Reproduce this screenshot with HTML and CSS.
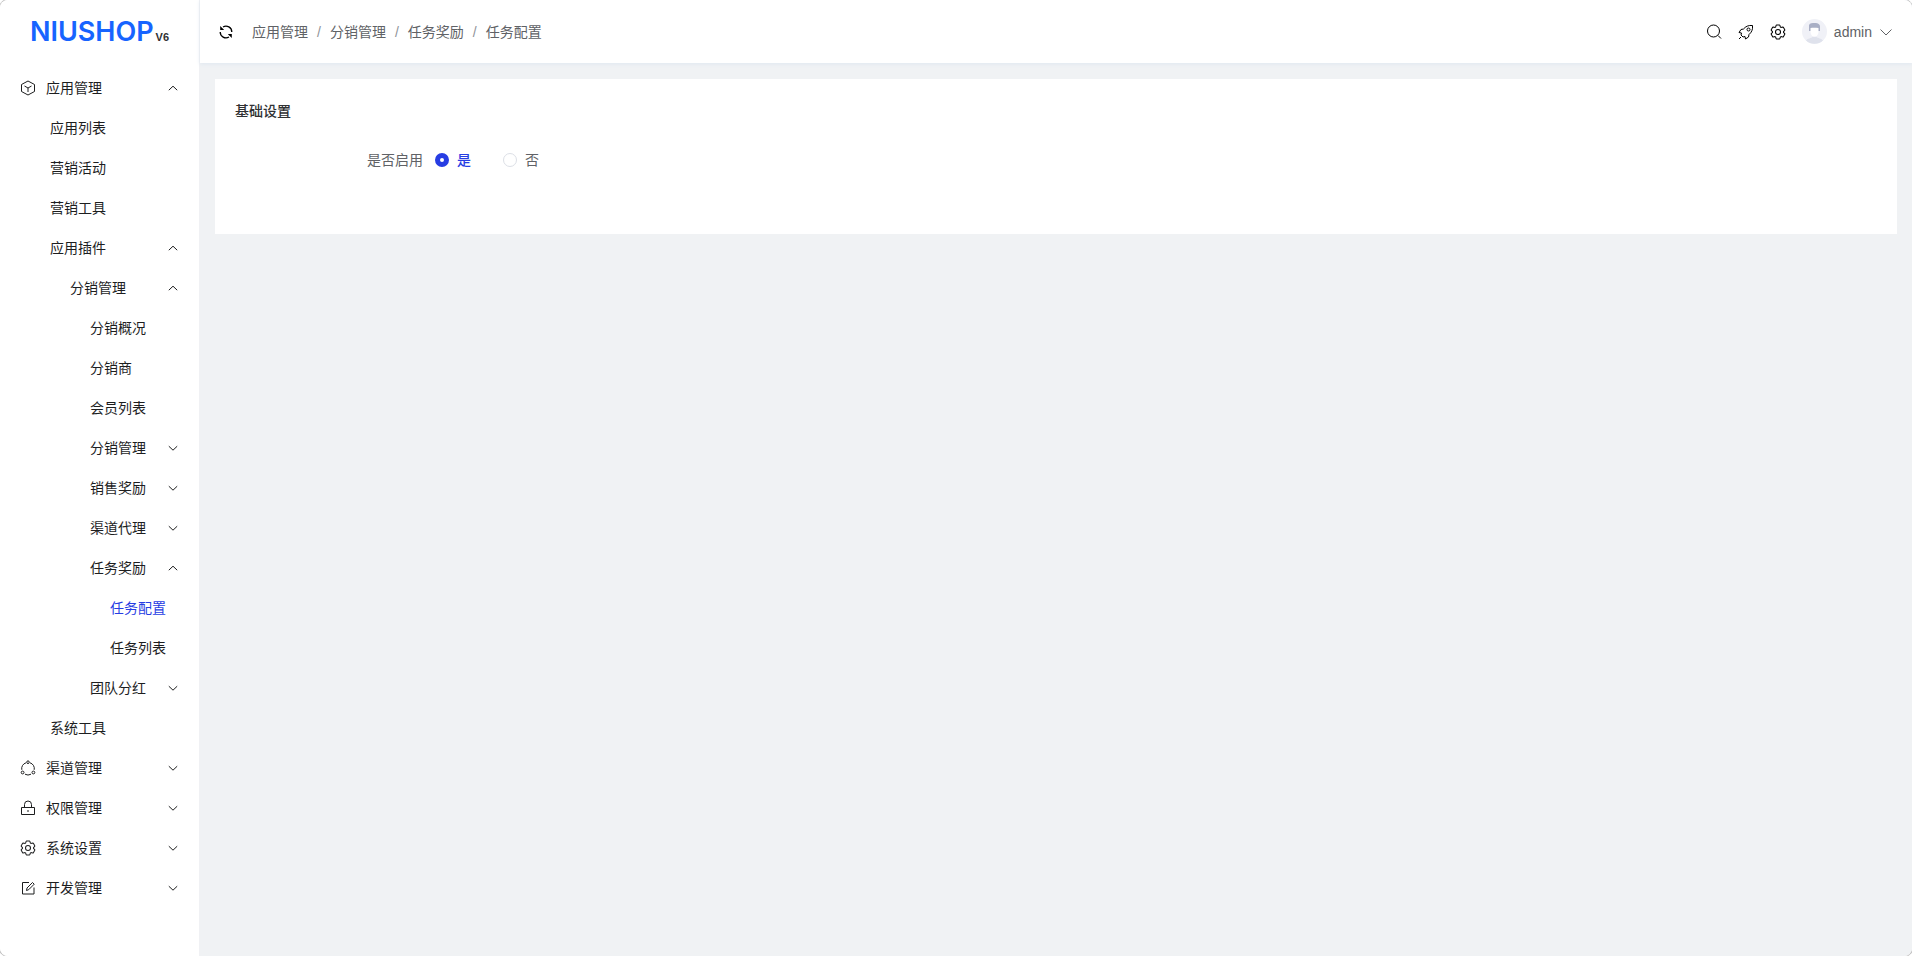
FILE: index.html
```
<!DOCTYPE html>
<html lang="zh-CN">
<head>
    <meta charset="UTF-8">
    <meta name="viewport" content="width=device-width, initial-scale=1.0">
    <title>任务配置</title>
    <link rel="stylesheet" href="styles.css">
</head>
<body>
    <!-- Shared icons -->
    <svg class="sprite" aria-hidden="true">
        <symbol id="up" viewBox="0 0 12 12"><path d="M1.8 8.2L6 4.200l4.200 4"/></symbol>
        <symbol id="down" viewBox="0 0 12 12"><path d="M1.8 4.200L6 8.200l4.200-4"/></symbol>
        <symbol id="gear" viewBox="0 0 1024 1024">
            <path stroke-width="66" d="M600.704 64a32 32 0 0 1 30.464 22.208l35.2 109.376c14.784 7.232 28.928 15.36 42.432 24.512l112.384-24.192a32 32 0 0 1 34.432 15.36L944.32 364.8a32 32 0 0 1-4.032 37.504l-77.12 85.12a357.12 357.12 0 0 1 0 49.024l77.12 85.248a32 32 0 0 1 4.032 37.504l-88.704 153.6a32 32 0 0 1-34.432 15.296L708.8 803.904c-13.44 9.088-27.648 17.28-42.368 24.512l-35.264 109.376A32 32 0 0 1 600.704 960H423.296a32 32 0 0 1-30.464-22.208L357.696 828.48a351.616 351.616 0 0 1-42.56-24.64l-112.32 24.256a32 32 0 0 1-34.432-15.36L79.68 659.2a32 32 0 0 1 4.032-37.504l77.12-85.248a357.12 357.12 0 0 1 0-48.896l-77.12-85.248A32 32 0 0 1 79.68 364.8l88.704-153.6a32 32 0 0 1 34.432-15.296l112.32 24.256c13.568-9.152 27.776-17.408 42.56-24.64l35.2-109.312A32 32 0 0 1 423.232 64z"/>
            <circle stroke-width="66" cx="512" cy="512" r="160"/>
        </symbol>
    </svg>
    <div class="app">
        <aside class="sidebar">
            <a class="logo" href="#"><span class="logo-name">NIUSHOP</span><span class="logo-version">V6</span></a>
            <nav class="menu">
                <button class="menu-item top">
                    <svg class="icon" viewBox="0 0 16 16"><path d="M8 1l6.500 3.500v7L8 15l-6.500-3.500v-7zM4.500 6L8 8l3.500-2M8 8v4"/></svg>
                    <span>应用管理</span><svg class="arrow"><use href="#up"/></svg>
                </button>
                <a class="menu-item level-1" href="#">应用列表</a>
                <a class="menu-item level-1" href="#">营销活动</a>
                <a class="menu-item level-1" href="#">营销工具</a>
                <button class="menu-item level-1"><span>应用插件</span><svg class="arrow"><use href="#up"/></svg></button>
                <button class="menu-item level-2"><span>分销管理</span><svg class="arrow"><use href="#up"/></svg></button>
                <a class="menu-item level-3" href="#">分销概况</a>
                <a class="menu-item level-3" href="#">分销商</a>
                <a class="menu-item level-3" href="#">会员列表</a>
                <button class="menu-item level-3"><span>分销管理</span><svg class="arrow"><use href="#down"/></svg></button>
                <button class="menu-item level-3"><span>销售奖励</span><svg class="arrow"><use href="#down"/></svg></button>
                <button class="menu-item level-3"><span>渠道代理</span><svg class="arrow"><use href="#down"/></svg></button>
                <button class="menu-item level-3"><span>任务奖励</span><svg class="arrow"><use href="#up"/></svg></button>
                <a class="menu-item level-4 active" href="#">任务配置</a>
                <a class="menu-item level-4" href="#">任务列表</a>
                <button class="menu-item level-3"><span>团队分红</span><svg class="arrow"><use href="#down"/></svg></button>
                <a class="menu-item level-1" href="#">系统工具</a>
                <button class="menu-item top">
                    <svg class="icon" viewBox="0 0 16 16"><path d="M6 2.800a6 6 0 0 0-4.200 7M10 2.800a6 6 0 0 1 4.200 7M5 14.200a6 6 0 0 0 6 0"/><circle cx="8" cy="2.200" r="1.300"/><circle cx="2.600" cy="12.500" r="1.400"/><circle cx="13.400" cy="12.500" r="1.400"/></svg>
                    <span>渠道管理</span><svg class="arrow"><use href="#down"/></svg>
                </button>
                <button class="menu-item top">
                    <svg class="icon" viewBox="0 0 16 16"><path d="M1.500 7.500h13v7h-13zM4.500 7.500V4.500a3.500 3.500 0 0 1 7 0v3M8 10v2"/></svg>
                    <span>权限管理</span><svg class="arrow"><use href="#down"/></svg>
                </button>
                <button class="menu-item top">
                    <svg class="icon"><use href="#gear"/></svg>
                    <span>系统设置</span><svg class="arrow"><use href="#down"/></svg>
                </button>
                <button class="menu-item top">
                    <svg class="icon" viewBox="0 0 16 16"><path d="M9 2.500H2.500v11.500h11.500V7.500M6.500 10.500l.500-2.500 5.500-5.500 1.700 1.700L8.700 9.700z"/></svg>
                    <span>开发管理</span><svg class="arrow"><use href="#down"/></svg>
                </button>
            </nav>
        </aside>
        <div class="content">
            <header class="header">
                <button class="icon-button" aria-label="刷新">
                    <svg class="icon" viewBox="0 0 16 16">
                        <path stroke-width="1.300" d="M5 3a5.800 5.800 0 0 1 8.800 5M11 13A5.800 5.800 0 0 1 2.200 8"/>
                        <path fill="currentColor" stroke="none" d="M2.200 2v4h4zM13.800 14v-4h-4z"/>
                    </svg>
                </button>
                <nav class="breadcrumb">
                    <a href="#">应用管理</a><i>/</i><a href="#">分销管理</a><i>/</i><a href="#">任务奖励</a><i>/</i><a href="#">任务配置</a>
                </nav>
                <div class="tools">
                    <button class="icon-button" aria-label="搜索">
                        <svg class="icon" viewBox="0 0 16 16"><circle cx="7.500" cy="7" r="6"/><path d="M12 11.500l3 3"/></svg>
                    </button>
                    <button class="icon-button" aria-label="更新">
                        <svg class="icon" viewBox="0 0 16 16"><path d="M14.500 1.500C10.500 1 7.500 2.500 5.500 5L3 5.500 1 8.500l2.500.500-.500 2L5 13l2-.500.500 2.500 3-2 .500-2.500c2.500-2 4-5 3.500-9zM3 13l-2 2"/><circle cx="10.500" cy="5.500" r="1.500"/></svg>
                    </button>
                    <button class="icon-button" aria-label="设置">
                        <svg class="icon"><use href="#gear"/></svg>
                    </button>
                    <button class="user">
                        <svg class="avatar" viewBox="0 0 25 25">
                            <circle cx="12.500" cy="12.500" r="12.500" fill="#f0f1f7"/>
                            <path d="M4 21.500c2-2.500 5-2 6.500-3.500h4c1.500 1.500 4.500 1 6.500 3.500a12.500 12.500 0 0 1-17 0z" fill="#dfe2ec"/>
                            <path d="M7 12V6c1-2 3-2 6-2s5 1 5 4v4z" fill="#a9afc5"/>
                            <path d="M8.500 9c2-.5 5-.5 8 0v4a4 4.500 0 0 1-8 0z" fill="#fff"/>
                        </svg>
                        <span>admin</span>
                        <svg class="user-arrow" viewBox="0 0 14 14"><path d="M1.500 4.500L7 10l5.500-5.500"/></svg>
                    </button>
                </div>
            </header>
            <main class="main">
                <form class="card">
                    <h3>基础设置</h3>
                    <div class="form-item" role="radiogroup" aria-labelledby="enable-label">
                        <span class="form-label" id="enable-label">是否启用</span>
                        <label class="radio"><input type="radio" name="enable" checked><span>是</span></label>
                        <label class="radio"><input type="radio" name="enable"><span>否</span></label>
                    </div>
                </form>
            </main>
        </div>
    </div>
</body>
</html>
```
FILE: styles.css
```
* {
    box-sizing: border-box;
}
body {
    margin: 0;
    font-family: "Liberation Sans", "Noto Sans CJK SC", sans-serif;
    font-size: 14px;
    line-height: 20px;
    color: #303133;
    background-color: #fff;
}
button {
    padding: 0;
    border: none;
    background: none;
    font: inherit;
    color: inherit;
    cursor: pointer;
}
a {
    color: inherit;
    text-decoration: none;
}
svg {
    fill: none;
    stroke: currentColor;
    flex-shrink: 0;
}
.sprite {
    display: none;
}
.app {
    display: flex;
    min-height: 100vh;
    border-radius: 8px;
    overflow: hidden;
    box-shadow: 0 0 0 1px #c4c4c4;
}
.sidebar {
    width: 200px;
    flex-shrink: 0;
    background-color: #fff;
    border-right: 1px solid #f0f1f4;
}
.logo {
    display: flex;
    align-items: baseline;
    justify-content: center;
    gap: 2px;
    height: 64px;
    line-height: 64px;
}
.logo-name {
    font-family: Inter, sans-serif;
    font-size: 27px;
    font-weight: 600;
    color: #1764ff;
}
.logo-version {
    font-size: 11px;
    font-weight: bold;
}
.menu {
    display: flex;
    flex-direction: column;
    padding-top: 4px;
}
.menu-item {
    display: flex;
    align-items: center;
    height: 40px;
    padding-right: 20px;
    color: #1d1e1f;
    text-align: left;
}
.top {
    gap: 10px;
    padding-left: 20px;
}
.level-1 {
    padding-left: 50px;
}
.level-2 {
    padding-left: 70px;
}
.level-3 {
    padding-left: 90px;
}
.level-4 {
    padding-left: 110px;
}
.active {
    color: #273de3;
}
.icon {
    width: 16px;
    height: 16px;
}
.arrow {
    width: 12px;
    height: 12px;
    margin-left: auto;
}
.content {
    flex: 1;
    display: flex;
    flex-direction: column;
    background-color: #f0f2f4;
}
.header {
    display: flex;
    align-items: center;
    height: 63px;
    padding: 0 19px 0 18px;
    background-color: #fff;
    box-shadow: 0 1px 4px #dfe7f0;
}
.icon-button {
    display: flex;
    color: #000;
}
.breadcrumb {
    display: flex;
    margin-left: 18px;
    color: #606266;
}
.breadcrumb i {
    margin: 0 9px;
    font-style: normal;
    color: #8f9399;
}
.tools {
    display: flex;
    align-items: center;
    gap: 16px;
    margin-left: auto;
}
.user {
    display: flex;
    align-items: center;
    gap: 7px;
    color: #606266;
}
.avatar {
    width: 25px;
    height: 25px;
    stroke: none;
}
.user-arrow {
    width: 14px;
    height: 14px;
}
.main {
    padding: 16px 15px;
}
.card {
    min-height: 155px;
    padding: 20px;
    background-color: #fff;
}
.card h3 {
    margin: 0;
    font-size: 14px;
    font-weight: 500;
    line-height: 24px;
}
.form-item {
    display: flex;
    align-items: center;
    height: 32px;
    margin-top: 21px;
    color: #606266;
}
.form-label {
    width: 188px;
    margin-right: 12px;
    text-align: right;
}
.radio {
    display: flex;
    align-items: center;
    gap: 8px;
    margin-right: 32px;
    cursor: pointer;
}
.radio input {
    appearance: none;
    width: 14px;
    height: 14px;
    margin: 0;
    border: 1px solid #dcdfe6;
    border-radius: 50%;
}
.radio input:checked {
    border: 5px solid #273de3;
}
.radio input:checked + span {
    color: #273de3;
    font-weight: 500;
}
```
